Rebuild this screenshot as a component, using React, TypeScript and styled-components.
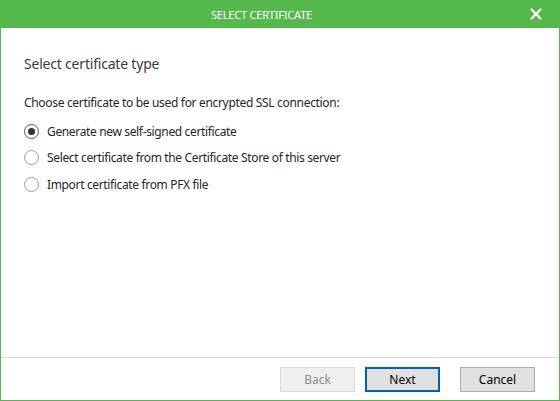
import React, { useState } from 'react';
import styled, { createGlobalStyle } from 'styled-components';

const palette = {
  green: '#54b84c',
  text: '#262626',
  heading: '#3a3a3a',
  line: '#d6d6d6',
  buttonBg: '#e1e1e1',
  buttonBorder: '#adadad',
  focus: '#0063b1',
};

const GlobalStyle = createGlobalStyle`
  html, body {
    margin: 0;
    padding: 0;
    background: #ffffff;
  }
  body {
    font-family: 'Noto Sans', 'Open Sans', 'Liberation Sans', sans-serif;
  }
  * {
    box-sizing: border-box;
  }
`;

const Window = styled.div`
  width: 560px;
  height: 401px;
  display: flex;
  flex-direction: column;
  background: #ffffff;
`;

const TitleBar = styled.div`
  height: 28px;
  flex: none;
  background: ${palette.green};
  display: flex;
  align-items: center;
  justify-content: center;
  padding-right: 37px;
  position: relative;

  h1 {
    margin: 0;
    font-size: 11px;
    font-weight: 400;
    color: #ffffff;
    letter-spacing: -0.2px;
  }
`;

const CloseButton = styled.button`
  position: absolute;
  right: 12px;
  top: 6px;
  width: 24px;
  height: 16px;
  padding: 0;
  border: 0;
  background: transparent;
  display: flex;
  align-items: center;
  justify-content: center;
  cursor: pointer;
`;

const Body = styled.div`
  flex: 1;
  display: flex;
  flex-direction: column;
  border: 1px solid ${palette.green};
  border-top: 0;
`;

const Content = styled.div`
  flex: 1;
  padding: 25px 23px 0;

  .page-title {
    margin: 0;
    font-size: 14px;
    font-weight: 400;
    color: ${palette.heading};
    line-height: 22px;
    letter-spacing: -0.2px;
  }

  .page-prompt {
    margin: 19px 0 6px;
    font-size: 12px;
    color: ${palette.text};
    line-height: 18px;
    letter-spacing: -0.32px;
  }
`;

const OptionList = styled.div`
  display: flex;
  flex-direction: column;
`;

const Option = styled.label`
  display: flex;
  align-items: center;
  height: 26.5px;
  gap: 8px;
  font-size: 12px;
  letter-spacing: -0.35px;
  color: ${palette.text};
  cursor: pointer;
`;

const Radio = styled.span<{ $checked: boolean }>`
  width: 15px;
  height: 15px;
  border-radius: 50%;
  border: 1px solid ${(p) => (p.$checked ? '#555555' : '#9a9a9a')};
  display: flex;
  align-items: center;
  justify-content: center;
  flex: none;

  &::after {
    content: '';
    width: 7px;
    height: 7px;
    border-radius: 50%;
    background: #333333;
    display: ${(p) => (p.$checked ? 'block' : 'none')};
  }
`;

const Footer = styled.div`
  flex: none;
  height: 43px;
  border-top: 1px solid ${palette.line};
  display: flex;
  justify-content: flex-end;
  align-items: flex-start;
  padding: 9px 24px 0 0;
  gap: 10px;
`;

const Button = styled.button<{ $primary?: boolean; $spaced?: boolean }>`
  width: 75px;
  height: 25px;
  padding: 0;
  margin-left: ${(p) => (p.$spaced ? '10px' : '0')};
  font-family: inherit;
  font-size: 12px;
  color: #000000;
  background: ${palette.buttonBg};
  border: 1px solid ${(p) => (p.$primary ? palette.focus : palette.buttonBorder)};
  box-shadow: ${(p) => (p.$primary ? `inset 0 0 0 1px ${palette.focus}` : 'none')};
  cursor: pointer;

  &:disabled {
    color: #8c8c8c;
    background: #efefef;
    border-color: #d9d9d9;
    cursor: default;
  }
`;

const options = [
  'Generate new self-signed certificate',
  'Select certificate from the Certificate Store of this server',
  'Import certificate from PFX file',
];

const App: React.FC = () => {
  const [selected, setSelected] = useState(0);

  return (
    <Window>
      <GlobalStyle />
      <TitleBar>
        <h1>SELECT CERTIFICATE</h1>
        <CloseButton type="button" aria-label="Close">
          <svg width="12" height="12" viewBox="0 0 12 12">
            <path d="M1 1 L11 11 M11 1 L1 11" stroke="#ffffff" strokeWidth="2.2" />
          </svg>
        </CloseButton>
      </TitleBar>
      <Body>
        <Content>
          <h2 className="page-title">Select certificate type</h2>
          <p className="page-prompt">Choose certificate to be used for encrypted SSL connection:</p>
          <OptionList>
            {options.map((text, index) => (
              <Option key={index} onClick={() => setSelected(index)}>
                <Radio $checked={index === selected} />
                {text}
              </Option>
            ))}
          </OptionList>
        </Content>
        <Footer>
          <Button type="button" disabled>
            Back
          </Button>
          <Button type="button" $primary>
            Next
          </Button>
          <Button type="button" $spaced>
            Cancel
          </Button>
        </Footer>
      </Body>
    </Window>
  );
};

export default App;
